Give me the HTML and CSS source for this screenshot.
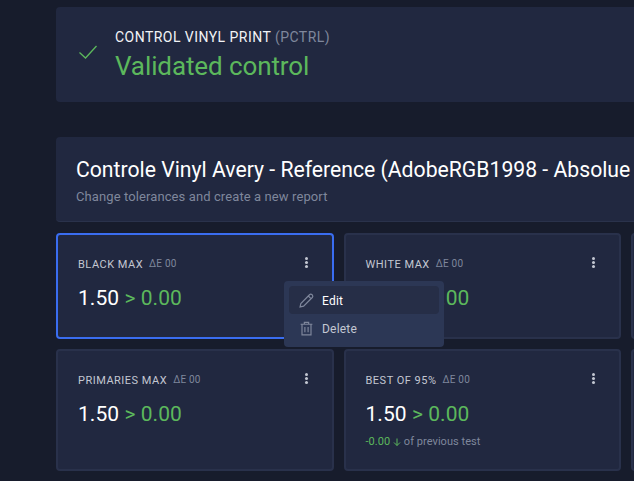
FILE: index.html
```html
<!DOCTYPE html>
<html lang="en">
<head>
<meta charset="utf-8">
<title>Control</title>
<link rel="stylesheet" href="styles.css">
</head>
<body>
<main class="page">
  <section class="panel status">
    <svg class="check" width="18" height="14" viewBox="0 0 18 14"><path d="M.5 7.500 L6.500 13 L17.500 1" fill="none" stroke="#5cb85c" stroke-width="1.300"/></svg>
    <div class="status-body">
      <div class="status-name">CONTROL VINYL PRINT <span class="muted">(PCTRL)</span></div>
      <div class="status-text">Validated control</div>
    </div>
  </section>
  <section class="panel head">
    <h1 class="title">Controle Vinyl Avery - Reference (AdobeRGB1998 - Absolue</h1>
    <p class="sub">Change tolerances and create a new report</p>
  </section>
  <section class="grid">
    <article class="card selected">
      <div class="label"><span>BLACK MAX</span><small>ΔE 00</small></div>
      <div class="value">1.50 <b>&gt; 0.00</b></div>
      <i class="dots"></i>
    </article>
    <article class="card">
      <div class="label"><span>WHITE MAX</span><small>ΔE 00</small></div>
      <div class="value">1.50 <b>&gt; 0.00</b></div>
      <i class="dots"></i>
    </article>
    <article class="card"></article>
    <article class="card">
      <div class="label"><span>PRIMARIES MAX</span><small>ΔE 00</small></div>
      <div class="value">1.50 <b>&gt; 0.00</b></div>
      <i class="dots"></i>
    </article>
    <article class="card">
      <div class="label"><span>BEST OF 95%</span><small>ΔE 00</small></div>
      <div class="value">1.50 <b>&gt; 0.00</b></div>
      <div class="delta"><b>-0.00</b> <svg class="arrow" width="8" height="8" viewBox="0 0 8 8"><path d="M4 .5V7.500M1 4.500L4 7.500L7 4.500" fill="none" stroke="#5cb85c" stroke-width="1"/></svg> of previous test</div>
      <i class="dots"></i>
    </article>
    <article class="card"></article>
  </section>
  <nav class="menu">
    <div class="item active">
      <svg width="15" height="15" viewBox="0 0 14 14"><path d="M1 13 L1.700 9.800 L9.800 1.600 Q11 .6 12.300 1.700 Q13.400 3 12.400 4.200 L4.300 12.300 Z M8.700 2.800 L11.200 5.300" fill="none" stroke="#7f879c" stroke-width="1.100"/></svg>
      <span>Edit</span>
    </div>
    <div class="item">
      <svg width="15" height="15" viewBox="0 0 14 14"><path d="M1.500 3H12.500M5 3V1.200H9V3M2.800 3V13H11.200V3M5.500 5.500V10.500M8.500 5.500V10.500" fill="none" stroke="#7f879c" stroke-width="1.100"/></svg>
      <span>Delete</span>
    </div>
  </nav>
</main>
</body>
</html>
```
FILE: styles.css
```css
html, body {
  margin: 0;
  height: 100%;
  overflow: hidden;
  background: #171c2c;
}
.page {
  position: relative;
  width: 634px;
  height: 481px;
  overflow: hidden;
  box-sizing: border-box;
  padding: 7px 0 0 56px;
  font-family: Roboto, "Liberation Sans", sans-serif;
  color: #fff;
}
.panel {
  background: #212840;
  border-radius: 4px;
  width: 900px;
  box-sizing: border-box;
}
.status {
  height: 95px;
  display: flex;
  align-items: center;
  padding: 0 0 0 23px;
  gap: 18px;
}
.check { flex: none; margin-top: -5px; }
.status-body { padding-top: 2px; }
.status-name {
  font-size: 14px;
  line-height: 18px;
  letter-spacing: .46px;
  color: #f2f3f6;
}
.muted { color: #7f879c; }
.status-text {
  margin-top: 3px;
  font-size: 26px;
  line-height: 34px;
  letter-spacing: -.1px;
  color: #5cb85c;
}
.head {
  height: 85px;
  margin-top: 35px;
  padding: 20px 20px 0;
  border-bottom: 1px solid #2a324b;
}
.title {
  margin: 0;
  font-size: 21.200px;
  line-height: 26px;
  font-weight: 400;
  white-space: nowrap;
}
.sub {
  margin: 6px 0 0;
  font-size: 13px;
  line-height: 16px;
  letter-spacing: .1px;
  color: #7f879c;
}
.grid {
  display: grid;
  grid-template-columns: repeat(3, 277.5px);
  grid-template-rows: 106px 122px;
  gap: 10px;
  margin-top: 11px;
}
.card {
  position: relative;
  box-sizing: border-box;
  background: #212840;
  border: 2px solid #29314b;
  border-radius: 4px;
  padding: 22px 20px 0;
}
.card.selected { border-color: #3a6df0; }
.label {
  display: flex;
  align-items: baseline;
  gap: 6px;
  font-size: 11px;
  line-height: 16px;
  letter-spacing: .5px;
  color: #c3c7d2;
}
.label small {
  font-size: 10px;
  letter-spacing: .2px;
  color: #7f879c;
  position: relative;
  top: -1px;
}
.value {
  margin-top: 12px;
  font-size: 21px;
  line-height: 26px;
  letter-spacing: .05px;
}
.value b, .delta b {
  font-weight: 400;
  color: #5cb85c;
}
.delta {
  margin-top: 8px;
  font-size: 11px;
  line-height: 14px;
  letter-spacing: .05px;
  color: #7f879c;
}
.arrow { vertical-align: -1px; }
.dots {
  position: absolute;
  top: 21.500px;
  right: 24px;
  width: 3px;
  height: 3px;
  border-radius: 50%;
  background: #c3c7d2;
  box-shadow: 0 4px 0 #c3c7d2, 0 8px 0 #c3c7d2;
}
.menu {
  position: absolute;
  left: 284px;
  top: 281px;
  width: 160px;
  height: 66px;
  box-sizing: border-box;
  padding: 5px;
  background: #2c3755;
  border-radius: 4px;
}
.item {
  display: flex;
  align-items: center;
  gap: 8px;
  height: 28px;
  padding: 1px 0 0 10px;
  box-sizing: border-box;
  border-radius: 4px;
  font-size: 12px;
  letter-spacing: .2px;
  color: #c3c7d2;
}
.item.active {
  background: #262e47;
  color: #fff;
}
```
